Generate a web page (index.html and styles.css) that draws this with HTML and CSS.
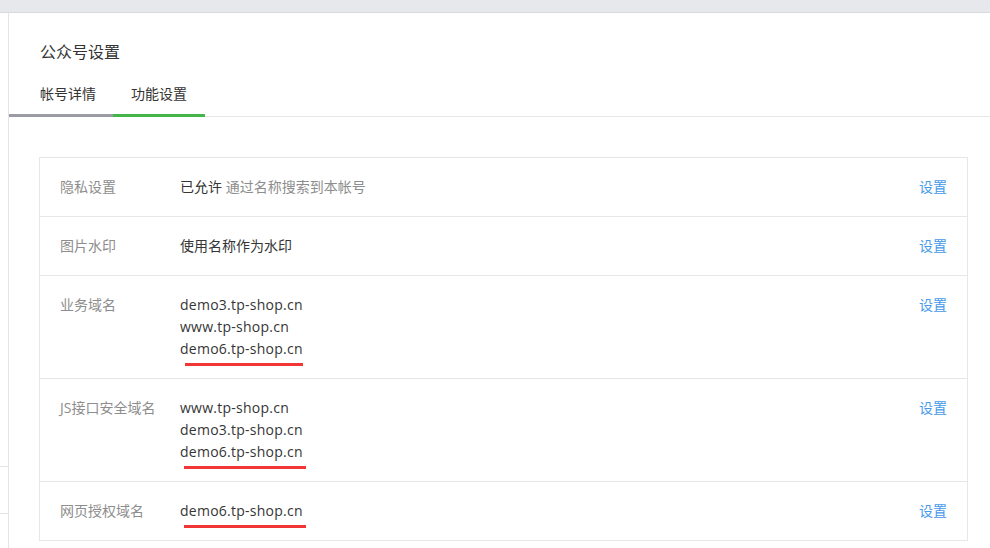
FILE: index.html
```html
<!DOCTYPE html>
<html lang="zh-CN">
<head>
<meta charset="utf-8">
<title>公众号设置</title>
<link rel="stylesheet" href="styles.css">
</head>
<body>
<div class="topbar"></div>
<div class="layout">
  <aside class="sidebar">
    <div class="side-item"></div>
  </aside>
  <main class="main">
    <h1 class="title">公众号设置</h1>
    <nav class="tabs">
      <a class="tab tab-first">帐号详情</a>
      <a class="tab tab-active">功能设置</a>
    </nav>
    <div class="table">
      <div class="row">
        <div class="label">隐私设置</div>
        <div class="value">已允许 <span class="muted">通过名称搜索到本帐号</span></div>
        <a class="link">设置</a>
      </div>
      <div class="row">
        <div class="label">图片水印</div>
        <div class="value">使用名称作为水印</div>
        <a class="link">设置</a>
      </div>
      <div class="row">
        <div class="label">业务域名</div>
        <div class="value domains">
          <div>demo3.tp-shop.cn</div>
          <div>www.tp-shop.cn</div>
          <div><span class="mark">demo6.tp-shop.cn</span></div>
        </div>
        <a class="link">设置</a>
      </div>
      <div class="row">
        <div class="label">JS接口安全域名</div>
        <div class="value domains">
          <div>www.tp-shop.cn</div>
          <div>demo3.tp-shop.cn</div>
          <div><span class="mark mark-wide">demo6.tp-shop.cn</span></div>
        </div>
        <a class="link">设置</a>
      </div>
      <div class="row">
        <div class="label">网页授权域名</div>
        <div class="value domains">
          <div><span class="mark mark-wide">demo6.tp-shop.cn</span></div>
        </div>
        <a class="link">设置</a>
      </div>
    </div>
  </main>
</div>
</body>
</html>
```

FILE: styles.css
```css
html, body {
  margin: 0;
  padding: 0;
  background: #ffffff;
  font-family: "Open Sans", "Noto Sans CJK SC", sans-serif;
  font-size: 14px;
  color: #353535;
  overflow: hidden;
}

.topbar {
  height: 12px;
  background: #e7e8ec;
  border-bottom: 1px solid #d9dadd;
}

.layout {
  display: flex;
  height: 535px;
}

.sidebar {
  width: 8px;
  flex: none;
  border-right: 1px solid #e4e4e7;
  padding-top: 453px;
}

.side-item {
  height: 46px;
  border-top: 1px solid #e4e4e7;
  border-bottom: 1px solid #e4e4e7;
}

.main {
  flex: 1;
  padding-top: 27px;
}

.title {
  margin: 0 0 10px 31px;
  font-size: 16px;
  font-weight: normal;
  line-height: 24px;
  color: #333333;
}

.tabs {
  display: flex;
  border-bottom: 1px solid #e7e7eb;
}

.tab {
  display: block;
  padding: 0 18px;
  line-height: 40px;
  border-bottom: 3px solid transparent;
  margin-bottom: -1px;
  color: #333333;
  font-size: 14px;
}

.tab-first {
  padding-left: 31px;
  padding-right: 17px;
  border-bottom-color: #9a9ba3;
}

.tab-active {
  border-bottom-color: #44b549;
}

.table {
  margin: 40px 22px 0 30px;
  border: 1px solid #e7e7eb;
  border-bottom: none;
}

.row {
  display: flex;
  align-items: flex-start;
  padding: 18px 20px 18px 20px;
  line-height: 22px;
  border-bottom: 1px solid #e7e7eb;
}

.label {
  width: 120px;
  flex: none;
  color: #8d8d8d;
}

.value {
  flex: 1;
  color: #353535;
}

.domains {
  letter-spacing: 0.25px;
}

.muted {
  color: #8d8d8d;
}

.link {
  color: #459ae9;
  cursor: pointer;
}

.mark {
  position: relative;
  display: inline-block;
}

.mark::after {
  content: "";
  position: absolute;
  left: 5px;
  right: 0;
  bottom: -6px;
  height: 3px;
  background: #f23535;
}

.mark-wide::after {
  left: 4px;
  right: -3px;
}
```
